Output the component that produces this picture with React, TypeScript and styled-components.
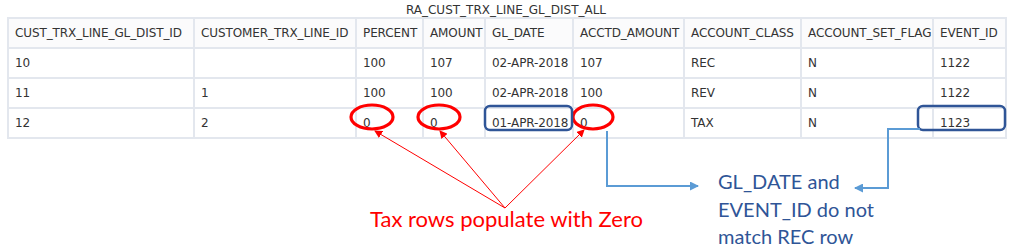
import styled, { createGlobalStyle } from "styled-components"

const GlobalStyle = createGlobalStyle`
  body {
    margin: 0;
    background: #ffffff;
  }
`

type Row = string[]

const columns: { name: string; width: number }[] = [
  { name: "CUST_TRX_LINE_GL_DIST_ID", width: 186 },
  { name: "CUSTOMER_TRX_LINE_ID", width: 162 },
  { name: "PERCENT", width: 67 },
  { name: "AMOUNT", width: 62 },
  { name: "GL_DATE", width: 88 },
  { name: "ACCTD_AMOUNT", width: 111 },
  { name: "ACCOUNT_CLASS", width: 117 },
  { name: "ACCOUNT_SET_FLAG", width: 132 },
  { name: "EVENT_ID", width: 73 },
]

const rows: Row[] = [
  ["10", "", "100", "107", "02-APR-2018", "107", "REC", "N", "1122"],
  ["11", "1", "100", "100", "02-APR-2018", "100", "REV", "N", "1122"],
  ["12", "2", "0", "0", "01-APR-2018", "0", "TAX", "N", "1123"],
]

export default function App() {
  return (<>
    <GlobalStyle />
    <Page>
      <TableWrap>
        <Caption>RA_CUST_TRX_LINE_GL_DIST_ALL</Caption>
        <DataTable>
          <colgroup>
            {columns.map(c => <col key={c.name} style={{ width: c.width }} />)}
          </colgroup>
          <thead>
            <tr>
              {columns.map(c => <HeadCell key={c.name}>{c.name}</HeadCell>)}
            </tr>
          </thead>
          <tbody>
            {rows.map(r => (
              <tr key={r[0]}>
                {r.map((v, i) => <Cell key={i}>{v}</Cell>)}
              </tr>
            ))}
          </tbody>
        </DataTable>
      </TableWrap>

      {/* callout shapes and arrows drawn over the table */}
      <Overlay width="1011" height="252" viewBox="0 0 1011 252">
        <defs>
          <marker id="redHead" markerWidth="8" markerHeight="8" refX="7" refY="4" orient="auto" markerUnits="userSpaceOnUse">
            <path d="M0,0 L8,4 L0,8 z" fill="#ff0000" />
          </marker>
          <marker id="blueHead" markerWidth="9" markerHeight="9" refX="8" refY="4.5" orient="auto" markerUnits="userSpaceOnUse">
            <path d="M0,0 L9,4.5 L0,9 z" fill="#5b9bd5" />
          </marker>
        </defs>

        <ellipse cx="372" cy="117" rx="21" ry="12" fill="none" stroke="#ff0000" strokeWidth="3.2" />
        <ellipse cx="439" cy="117" rx="21" ry="12" fill="none" stroke="#ff0000" strokeWidth="3.2" />
        <ellipse cx="593" cy="117" rx="20" ry="12" fill="none" stroke="#ff0000" strokeWidth="3.2" />

        <rect x="485" y="106" width="87" height="24" rx="5" fill="none" stroke="#2f5597" strokeWidth="2.5" />
        <rect x="918" y="106" width="87" height="24" rx="5" fill="none" stroke="#2f5597" strokeWidth="2.5" />

        <line x1="505" y1="208" x2="375" y2="131" stroke="#ff0000" strokeWidth="1" markerEnd="url(#redHead)" />
        <line x1="505" y1="208" x2="440" y2="131" stroke="#ff0000" strokeWidth="1" markerEnd="url(#redHead)" />
        <line x1="505" y1="208" x2="584" y2="130" stroke="#ff0000" strokeWidth="1" markerEnd="url(#redHead)" />

        <polyline points="607,131 607,186 698,186" fill="none" stroke="#5b9bd5" strokeWidth="2" markerEnd="url(#blueHead)" />
        <polyline points="920,129 888,129 888,188 855,188" fill="none" stroke="#5b9bd5" strokeWidth="2" markerEnd="url(#blueHead)" />
      </Overlay>

      <RedNote>Tax rows populate with Zero</RedNote>
      <BlueNote>GL_DATE and<br />EVENT_ID do not<br />match REC row</BlueNote>
    </Page>
  </>)
}

const Page = styled.div`
  position: relative;
  width: 1011px;
  height: 252px;
  overflow: hidden;
  padding: 0 6px 0 7px;
  box-sizing: border-box;
`

const TableWrap = styled.div`
  width: 998px;
`

const Caption = styled.div`
  height: 17px;
  line-height: 20px;
  text-align: center;
  font-family: "DejaVu Sans", Verdana, sans-serif;
  font-size: 12px;
  color: #333;
`

const DataTable = styled.table`
  width: 998px;
  table-layout: fixed;
  border-collapse: collapse;
  font-family: "DejaVu Sans", Verdana, sans-serif;
  font-size: 12px;
  letter-spacing: -0.1px;
  color: #333;
`

const HeadCell = styled.th`
  height: 28px;
  padding: 0 0 0 6px;
  text-align: left;
  font-weight: normal;
  white-space: nowrap;
  overflow: hidden;
  background: #fbfbfc;
  border: 2px solid #e3e7ee;
`

const Cell = styled.td`
  height: 28px;
  padding: 0 0 0 6px;
  white-space: nowrap;
  overflow: hidden;
  border: 2px solid #e3e7ee;
`

const Overlay = styled.svg`
  position: absolute;
  left: 0;
  top: 0;
  pointer-events: none;
`

const RedNote = styled.div`
  position: absolute;
  left: 370px;
  top: 205px;
  font-family: Lato, "Liberation Sans", sans-serif;
  font-size: 22px;
  color: #ff0000;
  white-space: nowrap;
`

const BlueNote = styled.div`
  position: absolute;
  left: 718px;
  top: 168px;
  font-family: Lato, "Liberation Sans", sans-serif;
  font-size: 20px;
  line-height: 27.5px;
  color: #2f5597;
  white-space: nowrap;
`
